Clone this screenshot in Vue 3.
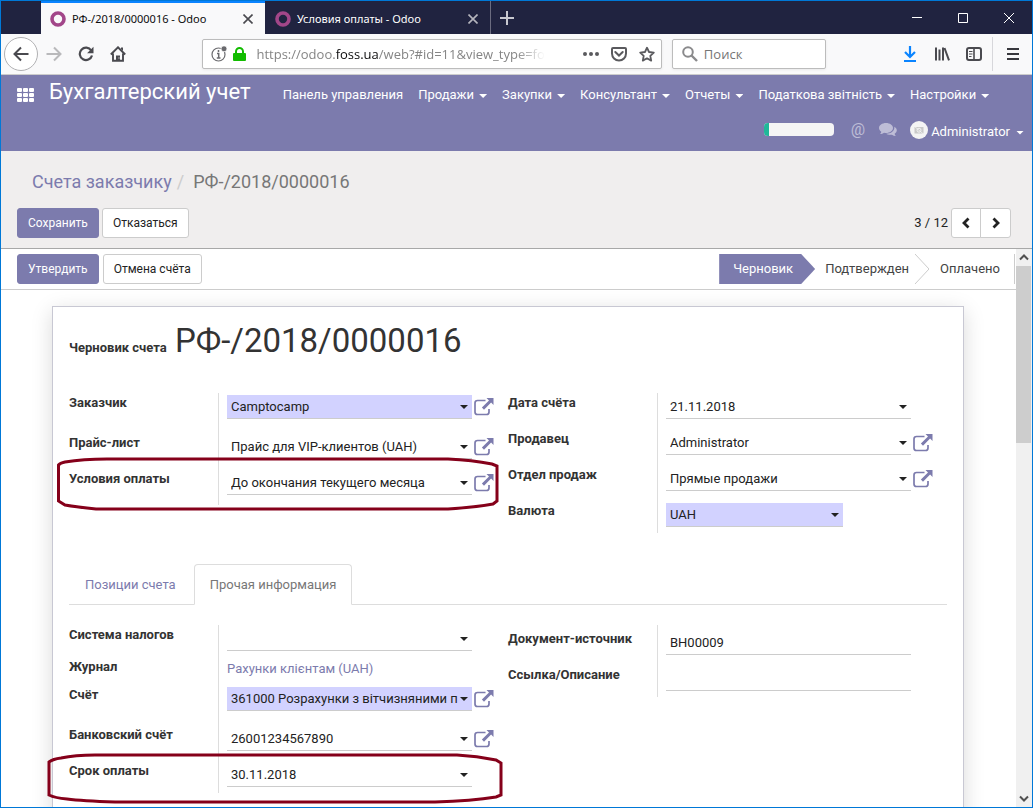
<script setup>
import { ref } from 'vue'

const menu = [
  { text: 'Панель управления', caret: false },
  { text: 'Продажи', caret: true },
  { text: 'Закупки', caret: true },
  { text: 'Консультант', caret: true },
  { text: 'Отчеты', caret: true },
  { text: 'Податкова звітність', caret: true },
  { text: 'Настройки', caret: true },
]

const apps = []
for (let row = 0; row < 3; row++) {
  for (let col = 0; col < 3; col++) apps.push({ x: col * 6, y: row * 5 })
}

const topGroups = ref([
  [
    { id: 'partner', label: 'Заказчик', value: 'Camptocamp', required: true, caret: true, link: true, size: 'tall' },
    { id: 'pricelist', label: 'Прайс-лист', value: 'Прайс для VIP-клиентов (UAH)', caret: true, link: true },
    { id: 'term', label: 'Условия оплаты', value: 'До окончания текущего месяца', caret: true, link: true },
  ],
  [
    { id: 'date', label: 'Дата счёта', value: '21.11.2018', caret: true },
    { id: 'seller', label: 'Продавец', value: 'Administrator', caret: true, link: true },
    { id: 'team', label: 'Отдел продаж', value: 'Прямые продажи', caret: true, link: true },
    { id: 'currency', label: 'Валюта', value: 'UAH', kind: 'select', required: true, caret: true, size: 'short' },
  ],
])

const infoGroups = ref([
  [
    { id: 'fiscal', label: 'Система налогов', value: '', caret: true, size: 'short' },
    { id: 'journal', label: 'Журнал', value: 'Рахунки клієнтам (UAH)', kind: 'link', size: 'text' },
    { id: 'account', label: 'Счёт', value: '361000 Розрахунки з вітчизняними п', required: true, caret: true, link: true, size: 'tall' },
    { id: 'bank', label: 'Банковский счёт', value: '26001234567890', caret: true, link: true },
    { id: 'due', label: 'Срок оплаты', value: '30.11.2018', caret: true, size: 'short' },
  ],
  [
    { id: 'origin', label: 'Документ-источник', value: 'BH00009' },
    { id: 'reference', label: 'Ссылка/Описание', value: '', size: 'short' },
  ],
])

const sections = [
  { key: 'main', groups: topGroups },
  { key: 'info', groups: infoGroups },
]
</script>

<template>
  <div class="window">
    <header class="titlebar">
      <div class="tab current">
        <svg class="favicon" viewBox="0 0 16 16"><circle cx="8" cy="8" r="6" /></svg>
        <span class="tab-title">РФ-/2018/0000016 - Odoo</span>
        <button class="plain" aria-label="Закрыть вкладку"><svg width="10" height="10" viewBox="0 0 10 10"><path d="M.5.5l9 9M9.500.5l-9 9" stroke="currentColor" stroke-width="1.600" /></svg></button>
      </div>
      <div class="tab other">
        <svg class="favicon" viewBox="0 0 16 16"><circle cx="8" cy="8" r="6" /></svg>
        <span class="tab-title">Условия оплаты - Odoo</span>
        <button class="plain" aria-label="Закрыть вкладку"><svg width="10" height="10" viewBox="0 0 10 10"><path d="M.5.5l9 9M9.500.5l-9 9" stroke="currentColor" stroke-width="1.600" /></svg></button>
      </div>
      <button class="plain newtab" aria-label="Новая вкладка"><svg width="14" height="14" viewBox="0 0 14 14"><path d="M7 0v14M0 7h14" stroke="#c8c8d0" stroke-width="2" /></svg></button>
      <div class="window-buttons">
        <button class="plain" aria-label="Свернуть"><svg width="10" height="10" viewBox="0 0 10 10"><path d="M0 4.500h10" stroke="#fff" /></svg></button>
        <button class="plain" aria-label="Развернуть"><svg width="10" height="10" viewBox="0 0 10 10"><path d="M.5.5h9v9h-9z" fill="none" stroke="#fff" /></svg></button>
        <button class="plain" aria-label="Закрыть"><svg width="10" height="10" viewBox="0 0 10 10"><path d="M0 0l10 10M10 0L0 10" stroke="#fff" /></svg></button>
      </div>
    </header>

    <div class="toolbar">
      <button class="plain back" aria-label="Назад"><svg width="16" height="16" viewBox="0 0 16 16"><path d="M15.500 8H2M8 1.500L1.500 8 8 14.500" fill="none" stroke="#4a4a4f" stroke-width="2" /></svg></button>
      <button class="plain forward" aria-label="Вперёд"><svg width="16" height="16" viewBox="0 0 16 16"><path d="M.5 8H14M8 1.500L14.500 8 8 14.500" fill="none" stroke="#b9b9bb" stroke-width="2" /></svg></button>
      <button class="plain reload" aria-label="Обновить"><svg width="16" height="16" viewBox="0 0 16 16"><path d="M13.200 4.500A6.200 6.200 0 1 0 14 9.500" fill="none" stroke="#4a4a4f" stroke-width="2.200" /><path d="M15.500.8v6.400H9.100z" fill="#4a4a4f" /></svg></button>
      <button class="plain home" aria-label="Домой"><svg width="16" height="16" viewBox="0 0 16 16"><path d="M.8 8.500L8 1.300l7.200 7.200M3 7.500v7.300h10V7.500" fill="none" stroke="#4a4a4f" stroke-width="1.900" /><path d="M6 15V9.500h4V15zM11 1.500h2V5l-2-2z" fill="#4a4a4f" /><path d="M8.500 12h1" stroke="#fff" /></svg></button>
      <span class="spring"></span>
      <div class="urlbar">
        <svg width="16" height="16" viewBox="0 0 16 16"><circle cx="7.500" cy="8.500" r="6.500" fill="none" stroke="#6a6a6e" stroke-width="1.200" /><circle cx="13" cy="2.800" r="3" fill="#6a6a6e" stroke="#fff" stroke-width=".8" /><path d="M7.500 4v2M6 7.500h1.700V12M5.800 12h3.700" fill="none" stroke="#6a6a6e" stroke-width="1.500" /></svg>
        <svg width="13" height="16" viewBox="0 0 13 16"><rect x="0" y="7" width="13" height="8" rx="1" fill="#12bc00" /><path d="M3 8V5.500a3.500 3.500 0 0 1 7 0V8" fill="none" stroke="#12bc00" stroke-width="2" /></svg>
        <a class="url" href="#">https://odoo.<b>foss.ua</b>/web?#id=11&amp;view_type=fo</a>
        <svg width="16" height="16" viewBox="0 0 16 16" fill="#5a5a5e"><circle cx="2" cy="8" r="2" /><circle cx="8" cy="8" r="2" /><circle cx="14" cy="8" r="2" /></svg>
        <svg width="16" height="16" viewBox="0 0 16 16" fill="none" stroke="#5a5a5e" stroke-width="2"><path d="M2 2h12q1 0 1 1v4.500a7 7 0 0 1-14 0V3q0-1 1-1z" /><path d="M4.300 6l3.700 3.500L11.700 6" stroke-linecap="round" /></svg>
        <svg width="16" height="16" viewBox="0 0 16 16"><path d="M8 1.700l2 4.300 4.800.6-3.500 3.200.9 4.800L8 12.300l-4.200 2.300.9-4.800L1.200 6.600 6 6z" fill="none" stroke="#5a5a5e" stroke-width="1.800" stroke-linejoin="round" /></svg>
      </div>
      <label class="search">
        <svg width="16" height="16" viewBox="0 0 16 16"><circle cx="6" cy="6" r="4.800" fill="none" stroke="#8a8a8c" stroke-width="2" /><path d="M9.500 9.500l5.500 5.500" stroke="#8a8a8c" stroke-width="2.400" /></svg>
        <input type="text" placeholder="Поиск" aria-label="Поиск" />
      </label>
      <span class="spring"></span>
      <div class="tools">
        <button class="plain" aria-label="Загрузки"><svg width="16" height="18" viewBox="0 0 16 18"><path d="M8 1v11M3 7l5 5 5-5M2 16h12" fill="none" stroke="#0a84ff" stroke-width="2.200" /></svg></button>
        <button class="plain" aria-label="Библиотека"><svg width="16" height="16" viewBox="0 0 16 16"><path d="M2 1.500v13M5.500 3.500v11M9 1.500v13M10.500 2l4.500 12.300" stroke="#4a4a4f" stroke-width="2" /></svg></button>
        <button class="plain" aria-label="Боковая панель"><svg width="16" height="16" viewBox="0 0 16 16"><rect x="1" y="2" width="14" height="12" rx="2" fill="none" stroke="#4a4a4f" stroke-width="2" /><path d="M8 2v12" stroke="#4a4a4f" stroke-width="1.600" /><path d="M3 5.500h3.500M3 8h3.500M3 10.500h2.500" stroke="#4a4a4f" /></svg></button>
        <span class="divider"></span>
        <button class="plain" aria-label="Меню"><svg width="12" height="12" viewBox="0 0 12 12"><path d="M0 1h12M0 6h12M0 11h12" stroke="#38383d" stroke-width="2" /></svg></button>
      </div>
    </div>

    <nav class="navbar">
      <div class="nav-row">
        <button class="plain apps" aria-label="Приложения"><svg width="18" height="14" viewBox="0 0 18 14" fill="#fff"><rect v-for="(cell, i) in apps" :key="i" :x="cell.x" :y="cell.y" width="5" height="4" rx="1" /></svg></button>
        <span class="brand">Бухгалтерский учет</span>
        <a v-for="item in menu" :key="item.text" class="menu-item" href="#">{{ item.text }}<i v-if="item.caret" class="caret"></i></a>
      </div>
      <div class="nav-row systray">
        <span class="progress"><span class="progress-value"></span></span>
        <span class="at">@</span>
        <svg class="comments" width="18" height="14" viewBox="0 0 18 14"><path d="M7 0c3.900 0 7 2.200 7 5s-3.100 5-7 5c-.7 0-1.300 0-1.900-.2C4 10.600 2.500 11 1 11c.8-.7 1.200-1.400 1.300-2.200C.9 7.900 0 6.500 0 5c0-2.800 3.100-5 7-5z" /><path d="M15.300 3.800c1.500.8 2.500 2 2.500 3.500 0 1.400-.9 2.600-2.200 3.400.1.800.6 1.500 1.300 2.200-1.500 0-2.900-.4-4-1.200-2.400.4-4.400-.1-5.700-.9 4.700 0 8.800-2.800 8.100-7z" /></svg>
        <a class="user" href="#">
          <svg width="18" height="18" viewBox="0 0 18 18"><circle cx="9" cy="9" r="9" fill="#f4f4f4" /><path d="M4.500 6h9v6.500h-9z" fill="#c9c9c9" /><circle cx="9" cy="9.200" r="2" fill="none" stroke="#f4f4f4" /><path d="M4 5l10 8.500" stroke="#f4f4f4" stroke-width=".8" /></svg>
          <span>Administrator</span><i class="caret"></i>
        </a>
      </div>
    </nav>

    <section class="control-panel">
      <div class="breadcrumb"><a href="#">Счета заказчику</a><span class="slash">/</span><span>РФ-/2018/0000016</span></div>
      <div class="actions">
        <button class="btn primary">Сохранить</button>
        <button class="btn">Отказаться</button>
        <span class="pager">3 / 12</span>
        <div class="pager-buttons">
          <button class="btn" aria-label="Предыдущая запись"><svg width="8" height="12" viewBox="0 0 8 12"><path d="M6.500 1.500L2 6l4.500 4.500" fill="none" stroke="#222" stroke-width="2.800" /></svg></button>
          <button class="btn" aria-label="Следующая запись"><svg width="8" height="12" viewBox="0 0 8 12"><path d="M1.500 1.500L6 6l-4.500 4.500" fill="none" stroke="#222" stroke-width="2.800" /></svg></button>
        </div>
      </div>
    </section>

    <main class="content">
      <div class="form-view">
        <div class="statusbar">
          <button class="btn primary">Утвердить</button>
          <button class="btn wide-gap">Отмена счёта</button>
          <div class="stages">
            <button class="stage active">Черновик</button>
            <button class="stage">Подтвержден</button>
            <svg width="14" height="30" viewBox="0 0 14 30"><path d="M0 0l14 15L0 30" fill="none" stroke="#ccc" /></svg>
            <button class="stage last">Оплачено</button>
          </div>
        </div>

        <article class="sheet">
          <h1 class="title"><span class="state">Черновик счета</span> РФ-/2018/0000016</h1>

          <template v-for="section in sections" :key="section.key">
            <div v-if="section.key === 'info'" class="notebook">
              <button class="page">Позиции счета</button>
              <button class="page selected">Прочая информация</button>
            </div>
            <div class="groups" :class="section.key">
              <div v-for="(group, g) in section.groups.value" :key="g" class="column">
                <div v-for="field in group" :key="field.id" class="row" :class="field.size">
                  <label class="label" :for="field.id">{{ field.label }}</label>
                  <div class="cell">
                    <a v-if="field.kind === 'link'" :id="field.id" class="value-link" href="#">{{ field.value }}</a>
                    <div v-else class="control" :class="{ required: field.required, narrow: field.kind === 'select' }">
                      <select v-if="field.kind === 'select'" :id="field.id" v-model="field.value"><option>UAH</option></select>
                      <input v-else :id="field.id" v-model="field.value" type="text" />
                      <i v-if="field.caret" class="caret"></i>
                    </div>
                    <button v-if="field.link" class="plain external" :aria-label="'Открыть: ' + field.label">
                      <svg width="20" height="18" viewBox="0 0 20 18"><path d="M11.500 2.500H3.500Q1 2.500 1 5v9q0 2.500 2.500 2.500h9Q15 16.500 15 14v-3" fill="none" stroke="#7c7bad" stroke-width="1.700" /><path d="M12.500 0H19.500v7l-2.400-2.400-7.100 7.100-2.100-2.100 7.100-7.100z" fill="#7c7bad" /></svg>
                    </button>
                  </div>
                </div>
              </div>
              <svg v-if="section.key === 'main'" class="mark" viewBox="0 0 442 54"><path d="M50 2H391Q415 3 435 7L440 9V44L436 47Q420 50 391 52H39Q20 50 8 48L1.500 44V8Q3 6 8 5Q26 2 50 2Z" /></svg>
              <svg v-else class="mark" viewBox="0 0 456 52"><path d="M48 3H410Q430 4 449 8L454 11V43L449 45Q425 49 388 50H68Q35 49 20 47Q8 46 2 43V10Q6 7 14 6Q28 3 48 3Z" /></svg>
            </div>
          </template>
        </article>
      </div>

      <div class="scrollbar" aria-hidden="true">
        <svg width="16" height="17" viewBox="0 0 16 17"><path d="M4 10.500l4-4 4 4" fill="none" stroke="#505050" stroke-width="2" /></svg>
        <div class="thumb"></div>
        <svg class="down" width="16" height="17" viewBox="0 0 16 17"><path d="M4 6.500l4 4 4-4" fill="none" stroke="#505050" stroke-width="2" /></svg>
      </div>
    </main>
  </div>
</template>

<style>
body { background: #fff; }
</style>

<style scoped>
* { box-sizing: border-box; }
svg { display: block; flex: none; }
a { text-decoration: none; color: inherit; }
button, input, select { font: inherit; color: inherit; margin: 0; }
.plain { display: flex; align-items: center; justify-content: center; flex: none; padding: 0; border: 0; background: none; }

.window { display: flex; flex-direction: column; height: 100vh; border: 1px solid #0078d7; background: #fff; color: #222; font: 13px/20px Roboto, sans-serif; overflow: hidden; }

.titlebar { display: flex; flex: none; height: 33px; padding-left: 40px; background: #202340; font: 11px/18px "Noto Sans", "Open Sans", sans-serif; }
.tab { display: flex; align-items: center; width: 224px; padding: 2px 12px 0 9px; }
.tab.current { border-top: 2px solid #0a84ff; padding-top: 0; background: #f9f9fa; color: #0c0c0d; }
.tab.current .plain { color: #4a4a4f; }
.tab.other { width: 226px; padding-left: 10px; border-right: 1px solid #6b6c80; color: #fff; }
.tab.other .plain { color: #b5b5bd; }
.favicon { width: 16px; height: 16px; }
.favicon circle { fill: none; stroke: #a24689; stroke-width: 3.600; }
.tab-title { flex: 1; margin-left: 6px; white-space: nowrap; }
.newtab { width: 32px; }
.window-buttons { display: flex; gap: 36px; margin-left: auto; padding-right: 18px; }

.toolbar { display: flex; align-items: center; flex: none; height: 41px; border-bottom: 1px solid #ccc; padding: 0 13px 0 3px; background: #f9f9fa; font: 13px/20px "Open Sans", "Noto Sans", sans-serif; }
.back { width: 34px; height: 34px; border: 1px solid #b1b1b3; border-radius: 50%; background: #fff; }
.forward { margin-left: 8px; }
.reload, .home { margin-left: 16px; }
.spring { flex: 15; }
.urlbar, .search { display: flex; align-items: center; height: 30px; border: 1px solid #bcbcbc; border-radius: 2px; background: #fff; box-shadow: 0 1px 3px #0001; }
.urlbar { flex: 87; min-width: 0; gap: 12px; padding: 0 6px 0 8px; }
.urlbar > svg + svg { margin-left: -6px; }
.urlbar > .url ~ svg { margin-left: 0; }
.url { flex: 1; min-width: 0; margin: 0 26px 0 -2px; white-space: nowrap; color: #858585; mask-image: linear-gradient(to right, #000 90%, transparent); }
.url b { color: #0c0c0d; font-weight: 400; }
.search { flex: 28; min-width: 0; margin-left: 10px; padding-left: 9px; gap: 6px; }
.search input { width: 100%; min-width: 0; padding: 0; border: 0; outline: 0; background: none; }
.search input::placeholder { color: #767676; opacity: 1; }
.tools { display: flex; align-items: center; gap: 16px; }
.tools .divider { width: 1px; height: 34px; margin: 0 -2px 0 -6px; background: #d7d7db; }

.navbar { flex: none; padding-top: 1px; background: #7c7bad; color: #fff; }
.nav-row { display: flex; align-items: center; height: 38px; }
.apps { width: 18px; margin: 0 15px 0 16px; }
.brand { margin: -6px 32px 0 -1px; font-size: 22px; line-height: 28px; white-space: nowrap; }
.menu-item { display: flex; align-items: center; margin-right: 15px; white-space: nowrap; }
.caret { flex: none; width: 8px; height: 4px; margin: 2px 0 0 5px; background: currentColor; clip-path: polygon(0 0, 100% 0, 50% 100%); }
.systray { height: 37px; justify-content: flex-end; padding: 0 8px 6px 0; }
.progress { display: flex; width: 70px; height: 13px; border-radius: 4px; overflow: hidden; background: #f5f5f5; }
.progress-value { width: 5px; background: #21b799; }
.at { margin-left: 17px; font-size: 16px; color: #bebdd6; }
.comments { margin-left: 14px; fill: #bebdd6; }
.user { display: flex; align-items: center; gap: 3px; margin-left: 13px; padding-top: 4px; }
.user svg { margin-top: -4px; }
.user .caret { margin-left: 3px; }

.control-panel { flex: none; height: 98px; border-bottom: 1px solid #a8a8a8; padding: 18px 21px 0 16px; background: #f0eeee; }
.breadcrumb { display: flex; padding-left: 15px; font-size: 18px; line-height: 26px; color: #777; }
.breadcrumb a { color: #7c7bad; }
.slash { margin: 0 9px 0 5px; color: #ccc; }
.actions { display: flex; align-items: center; gap: 3px; margin-top: 13px; }
.btn { height: 30px; padding: 0 10px; border: 1px solid #ccc; border-radius: 3px; background: #fff; font-size: 12px; line-height: 18px; white-space: nowrap; }
.btn.primary { border-color: #7c7bad; background: #7c7bad; color: #fff; }
.wide-gap { margin-left: 4px; }
.pager { margin-left: auto; }
.pager-buttons { display: flex; }
.pager-buttons .btn { display: flex; align-items: center; justify-content: center; width: 30px; padding: 0; border-radius: 3px 0 0 3px; }
.pager-buttons .btn + .btn { width: 31px; margin-left: -1px; border-radius: 0 3px 3px 0; }

.content { display: flex; flex: 1; min-height: 0; }
.form-view { flex: 1; min-width: 0; overflow: hidden; }
.statusbar { display: flex; align-items: center; height: 41px; border-bottom: 1px solid #ccc; padding: 0 1px 0 16px; }
.stages { display: flex; align-items: center; height: 30px; margin-left: auto; border-right: 1px solid #ccc; }
.stage { height: 30px; border: 0; padding: 0 6px 0 10px; background: none; color: #444; }
.stage.active { padding: 0 22px 0 14px; background: #7c7bad; color: #fff; clip-path: polygon(0 0, 82px 0, 100% 50%, 82px 100%, 0 100%); }
.stage.last { padding: 0 14px 0 11px; }

.sheet { margin: 16px 52px 0 51px; min-height: 600px; border: 1px solid #c8c8d3; padding: 14px 16px; background: #fff; box-shadow: 0 5px 20px rgba(0, 0, 0, .15); }
.title { margin: 0; font-size: 33px; line-height: 40px; font-weight: 400; color: #333; white-space: nowrap; }
.state { font-size: 13px; font-weight: 700; }
.groups { display: grid; grid-template-columns: 1fr 1fr; position: relative; }
.groups.main { margin-top: 25px; }
.groups.info { margin-top: 20px; }
.column { min-width: 0; }
.row { display: grid; grid-template-columns: 149px 1fr; height: 36px; }
.row.tall { height: 40px; }
.row.short { height: 32px; }
.row.text { height: 28px; }
.label { font-weight: 700; color: #333; white-space: nowrap; }
.cell { display: flex; align-items: flex-start; border-left: 1px solid #ddd; padding: 2px 14px 0 8px; }
.info .column:nth-child(2) .row:first-child { height: 40px; }
.info .column:nth-child(2) .row:first-child .label { padding-top: 4px; }
.info .column:nth-child(2) .row:first-child .cell { padding-top: 6px; }
.control { position: relative; flex: 1; min-width: 0; height: 24px; margin-right: 22px; border-bottom: 1px solid #ccc; }
.control.required { background: #d2d2ff; }
.control.narrow { flex: none; width: 177px; }
.control input, .control select { display: block; width: 100%; height: 23px; border: 0; outline: 0; padding: 0 12px 0 4px; background: none; appearance: none; }
.control .caret { position: absolute; right: 4px; top: 10px; margin: 0; }
.external { margin: 3px 0 0 -20px; }
.value-link { color: #7c7bad; }

.notebook { display: flex; gap: 2px; margin-top: 31px; border-bottom: 1px solid #ddd; }
.page { margin-bottom: -1px; border: 1px solid transparent; border-radius: 4px 4px 0 0; padding: 10px 15px 9px; background: none; color: #7c7bad; white-space: nowrap; }
.page.selected { border-color: #ddd #ddd #fff; background: #fff; color: #777; }

.mark { position: absolute; left: -12px; top: 64px; width: 442px; height: 54px; pointer-events: none; }
.info .mark { left: -22px; top: 127px; width: 456px; height: 52px; }
.mark path { fill: none; stroke: #85001a; stroke-width: 3; }

.scrollbar { display: flex; flex-direction: column; flex: none; width: 16px; background: #f0f0f0; }
.thumb { height: 177px; margin-right: 1px; background: #cdcdcd; }
.down { margin-top: auto; }
</style>
